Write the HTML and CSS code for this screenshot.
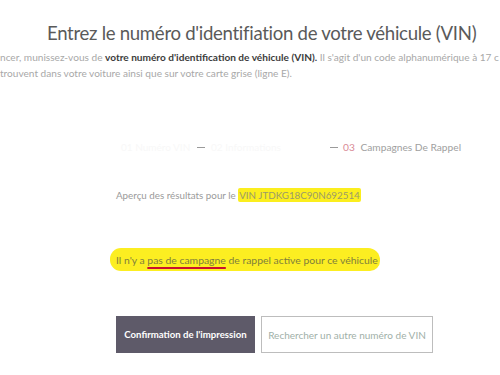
FILE: index.html
```html
<!DOCTYPE html>
<html lang="fr">
<head>
<meta charset="utf-8">
<link rel="stylesheet" href="styles.css">
</head>
<body>
<div class="page">
  <h1 class="title">Entrez le numéro d'identifiation de votre véhicule (VIN)</h1>
  <div class="intro">
    <div class="line">ncer, munissez-vous de <b>votre numéro d'identification de véhicule (VIN).</b> Il s'agit d'un code alphanumérique à 17 c</div>
    <div class="line">trouvent dans votre voiture ainsi que sur votre carte grise (ligne E).</div>
  </div>
  <div class="steps">
    <span class="step faint s1">01 Numéro VIN</span>
    <span class="dash"></span>
    <span class="step faint s2">02 Informations</span>
    <span class="dash"></span>
    <span class="step last"><span class="num">03</span> Campagnes De Rappel</span>
  </div>
  <div class="result">Aperçu des résultats pour le <mark class="hl">VIN JTDKG18C90N692514</mark></div>
  <div class="message"><span class="blob">Il n'y a <span class="red">pas de campagne</span> de rappel active pour ce véhicule</span></div>
  <div class="actions">
    <button class="btn primary">Confirmation de l'impression</button>
    <button class="btn secondary">Rechercher un autre numéro de VIN</button>
  </div>
</div>
</body>
</html>
```
FILE: styles.css
```css
html, body {
  margin: 0;
  padding: 0;
  background: #ffffff;
}
body {
  width: 500px;
  height: 375px;
  overflow: hidden;
  font-family: Lato, "Noto Sans", sans-serif;
}
.page {
  display: flex;
  flex-direction: column;
}
.title {
  margin: 0;
  padding: 20px 0 0 47px;
  font-size: 18.6px;
  line-height: 26px;
  font-weight: 400;
  color: #5a5a5a;
  white-space: nowrap;
  letter-spacing: -0.3px;
}
.intro {
  margin-top: 3px;
  font-size: 10.1px;
  line-height: 16px;
  color: #a8a8a8;
  white-space: nowrap;
  overflow: hidden;
}
.intro b {
  color: #3c3c3c;
  font-weight: 700;
}
.steps {
  margin-top: 59px;
  padding-left: 121px;
  display: flex;
  align-items: center;
  gap: 6px;
  font-size: 10px;
  line-height: 14px;
  color: #a0a0a0;
  white-space: nowrap;
}
.step.faint {
  color: #f8f8f8;
}
.s1 { width: 70px; }
.s2 { width: 113px; }
.dash {
  width: 8px;
  height: 1px;
  background: #9a9a9a;
}
.num {
  color: #d98a96;
  margin-right: 3px;
}
.last {
  margin-left: -1px;
  font-size: 10.2px;
}
.result {
  margin-top: 34px;
  padding-left: 116px;
  font-size: 9.8px;
  line-height: 14px;
  color: #9a9a9a;
}
.hl {
  background: #fbee1e;
  color: #9a9a6a;
  padding: 1px 1px;
  border-radius: 2px;
}
.message {
  margin-top: 46px;
  padding-left: 110px;
  font-size: 10.4px;
  line-height: 14px;
}
.blob {
  display: inline-block;
  background: #fcee21;
  color: #7f7f3c;
  padding: 5px 2px 4px 6px;
  border-radius: 11px 12px 10px 11px;
}
.red {
  text-decoration: underline;
  text-decoration-color: #c8102e;
  text-decoration-thickness: 2px;
  text-underline-offset: 3px;
}
.actions {
  margin-top: 45px;
  padding-left: 116px;
  display: flex;
  gap: 6px;
}
.btn {
  font-family: Lato, "Noto Sans", sans-serif;
  height: 37px;
  margin: 0;
  padding: 0;
  white-space: nowrap;
}
.primary {
  width: 139px;
  background: #5e5a69;
  border: none;
  color: #ffffff;
  font-weight: 700;
  font-size: 9.6px;
}
.secondary {
  width: 172px;
  background: #ffffff;
  border: 1px solid #bdbdbd;
  color: #9fb0a8;
  font-size: 10px;
}
```
